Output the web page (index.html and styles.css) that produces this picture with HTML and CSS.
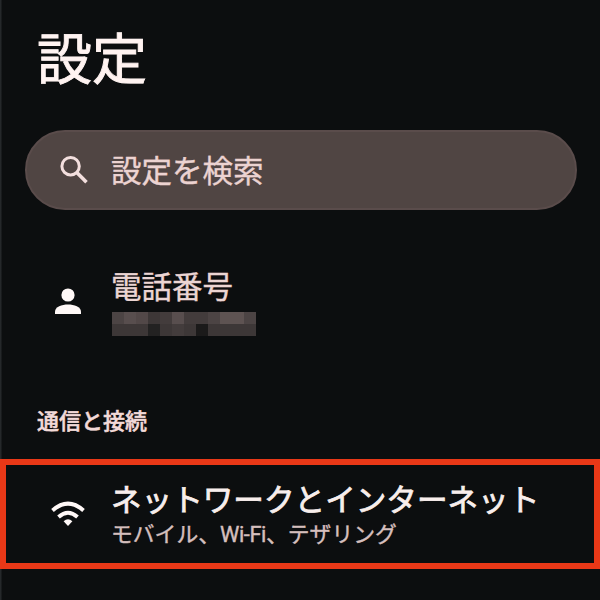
FILE: index.html
```
<!DOCTYPE html>
<html lang="ja">
<head>
    <meta charset="UTF-8">
    <meta name="viewport" content="width=device-width, initial-scale=1.0">
    <title>設定</title>
    <link rel="stylesheet" href="styles.css">
</head>
<body>
    <div class="screen">
        <h1 class="title">設定</h1>

        <!-- Search bar -->
        <div class="search">
            <svg class="search-icon" viewBox="0 0 28 28" width="28" height="28">
                <circle cx="10.6" cy="10.2" r="8.7" fill="none" stroke="#f3dfde" stroke-width="3"/>
                <path d="M16.8 16.4L26.5 26.2" fill="none" stroke="#f3dfde" stroke-width="3.6"/>
            </svg>
            <span class="search-text">設定を検索</span>
        </div>

        <!-- Phone number -->
        <div class="item phone">
            <svg class="icon person-icon" viewBox="0 0 28 28" width="28" height="28">
                <circle cx="14" cy="8" r="6.6" fill="#fff8f7"/>
                <path d="M1 27v-2.500c0-4.500 6.800-7 13-7s13 2.500 13 7V27z" fill="#fff8f7"/>
            </svg>
            <div class="item-body">
                <div class="phone-label">電話番号</div>
                <div class="mosaic">
                    <i class="m4"></i><i class="m6"></i><i class="m5"></i><i class="m2"></i><i class="m3"></i><i class="m6"></i><i class="m3"></i><i class="m3"></i><i class="m4"></i><i class="m7"></i><i class="m7"></i><i class="m4"></i>
                    <i class="m2"></i><i class="m2"></i><i class="m2"></i><i class="m1"></i><i class="m2"></i><i class="m3"></i><i class="m2"></i><i class="m0"></i><i class="m2"></i><i class="m2"></i><i class="m2"></i><i class="m2"></i>
                </div>
            </div>
        </div>

        <h2 class="section">通信と接続</h2>

        <!-- Highlighted row -->
        <div class="item network">
            <svg class="icon wifi-icon" viewBox="0 0 34 26" width="34" height="26">
                <path d="M1.500 9.500Q17-4.200 32.500 9.500" fill="none" stroke="#fff8f7" stroke-width="3.900"/>
                <path d="M7.500 16Q17 7.500 26.500 16" fill="none" stroke="#fff8f7" stroke-width="3.900"/>
                <path d="M12.600 20.200Q17 16.400 21.400 20.200L17 25z" fill="#fff8f7"/>
            </svg>
            <div class="item-body">
                <div class="network-label">ネットワークとインターネット</div>
                <div class="network-detail">モバイル、<span class="latin">Wi-Fi</span>、テザリング</div>
            </div>
        </div>
    </div>
</body>
</html>
```
FILE: styles.css
```
* {
    box-sizing: border-box;
}

body {
    margin: 0;
    background: #0c0e0f;
    font-family: "Noto Sans CJK JP", "Noto Sans", sans-serif;
    overflow: hidden;
}

.screen {
    width: 600px;
    height: 600px;
    padding-top: 20px;
    background: linear-gradient(to right, #25282a 1px, #0c0e0f 2px);
    white-space: nowrap;
}

.title {
    margin: 0 0 0 37px;
    height: 70px;
    line-height: 70px;
    font-size: 55px;
    font-weight: 400;
    color: #fff3f1;
    -webkit-text-stroke: 0.9px #fff3f1;
}

.search {
    display: flex;
    align-items: center;
    width: 552px;
    height: 80px;
    margin: 40px 0 0 25px;
    padding-left: 33px;
    border: 2px solid #5a4c4b;
    border-radius: 40px;
    background: #504543;
}

.search-icon {
    margin-right: 23px;
}

.search-text {
    padding-bottom: 2px;
    font-size: 30.500px;
    line-height: 40px;
    color: #ecd3d1;
    -webkit-text-stroke: 0.4px #ecd3d1;
}

.item {
    display: flex;
}

.icon {
    flex: none;
}

.phone {
    margin-top: 56px;
    padding-left: 54px;
}

.person-icon {
    margin: 21px 29px 0 0;
}

.phone-label {
    height: 46px;
    line-height: 38px;
    font-size: 30.500px;
    color: #ecd5d3;
    -webkit-text-stroke: 0.4px #ecd5d3;
}

/* 12px blocks over the hidden number */
.mosaic {
    display: grid;
    grid-template-columns: repeat(12, 12px);
    grid-auto-rows: 12px;
    margin-left: 1px;
}

.m0 { background: #1b1a1a; }
.m1 { background: #232222; }
.m2 { background: #3d3737; }
.m3 { background: #433c3c; }
.m4 { background: #4c4444; }
.m5 { background: #524848; }
.m6 { background: #584e4e; }
.m7 { background: #5e5352; }

.section {
    margin: 67px 0 0 37px;
    height: 32px;
    line-height: 32px;
    font-size: 22px;
    font-weight: 500;
    color: #f3dad8;
    -webkit-text-stroke: 0.5px #f3dad8;
}

.network {
    height: 110px;
    margin-top: 24px;
    padding-left: 45px;
    border: 6px solid #e93817;
}

.wifi-icon {
    margin: 36px 26px 0 0;
}

.network-label {
    height: 38px;
    margin-top: 14px;
    line-height: 38px;
    font-size: 30.600px;
    font-weight: 400;
    color: #f8eeec;
    -webkit-text-stroke: 0.8px #f8eeec;
}

.network-detail {
    height: 32px;
    line-height: 32px;
    font-size: 21.800px;
    color: #d5bfbd;
    -webkit-text-stroke: 0.4px #d5bfbd;
}

.latin {
    font-family: Roboto, sans-serif;
    letter-spacing: -0.4px;
}
```
